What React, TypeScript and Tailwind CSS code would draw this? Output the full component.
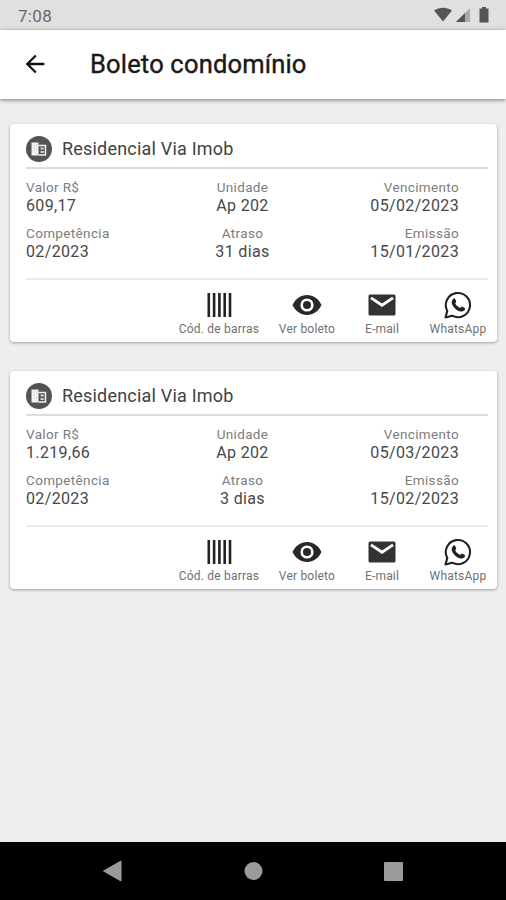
import React from 'react';
import { MdArrowBack } from 'react-icons/md';

interface Boleto {
  residencial: string;
  valor: string;
  unidade: string;
  vencimento: string;
  competencia: string;
  atraso: string;
  emissao: string;
}

const boletos: Boleto[] = [
  {
    residencial: 'Residencial Via Imob',
    valor: '609,17',
    unidade: 'Ap 202',
    vencimento: '05/02/2023',
    competencia: '02/2023',
    atraso: '31 dias',
    emissao: '15/01/2023',
  },
  {
    residencial: 'Residencial Via Imob',
    valor: '1.219,66',
    unidade: 'Ap 202',
    vencimento: '05/03/2023',
    competencia: '02/2023',
    atraso: '3 dias',
    emissao: '15/02/2023',
  },
];

const BuildingIcon = () => (
  <svg width="16" height="14" viewBox="0 0 16 14" fill="none">
    <path d="M0.500 0.500H7.500V13.500H0.500Z" fill="#f3f3f3" />
    <path d="M7.500 3.500H14.500V13H7.500" stroke="#f3f3f3" strokeWidth="1.500" />
    <path d="M9.500 5.500h3.300v2H9.500ZM9.500 9h3.300v2H9.500Z" fill="#cfcfcf" />
    <path d="M2.500 3.200h1.300M2.500 6h1.300M2.500 8.800h1.300M5 3.200h1M5 6h1M5 8.800h1" stroke="#ccc" />
  </svg>
);

const BarcodeIcon = () => (
  <svg width="25" height="24" viewBox="0 0 25 24" fill="#222">
    <path d="M0.500 0h2.600v24H0.500ZM5.800 0h2.600v24H5.800ZM11.100 0h2.600v24H11.100ZM16.400 0h2.600v24H16.400ZM21.700 0h2.600v24H21.700Z" />
  </svg>
);

const EyeIcon = () => (
  <svg width="30" height="22" viewBox="0 0 30 22">
    <path d="M0.500 11C3.500 4.700 8.800 1 15 1S26.500 4.700 29.500 11C26.500 17.300 21.200 21 15 21S3.500 17.300 0.500 11Z" fill="#282828" />
    <circle cx="15" cy="11" r="5.300" fill="#282828" stroke="white" strokeWidth="2.600" />
  </svg>
);

const MailIcon = () => (
  <svg width="28" height="22" viewBox="0 0 28 22" fill="none">
    <rect x="0.500" y="0.500" width="27" height="21" rx="1.500" fill="#333" />
    <path d="M3 3.800L14 11.200L25 3.800" stroke="white" strokeWidth="2.800" />
  </svg>
);

const WhatsAppIcon = () => (
  <svg width="28" height="28" viewBox="0 0 28 28" fill="none">
    <path
      d="M1.500 26.500L3.300 19.900A12.100 12.100 0 1 1 8.100 24.700Z"
      stroke="#222"
      strokeWidth="2.100"
      strokeLinejoin="round"
    />
    <path
      d="M9.300 7.700C10 7 10.900 7.100 11.200 7.900L12.200 10.300C12.500 11.100 11.200 12 11.300 12.600C12.300 14.600 13.900 16 16 16.900C16.700 17 17.300 15.500 18.100 15.600L20.700 16.900C21.400 17.300 21 18.800 20.200 19.600C18.800 20.900 16.800 20.900 14.600 19.900C11.500 18.500 9.200 16 8 13C7.300 11 7.700 9.100 9.300 7.700Z"
      fill="#222"
    />
  </svg>
);

const StatusBar = () => (
  <div className="flex h-[30px] shrink-0 items-center justify-between bg-[#e0e0e0] pl-[18px] pr-[16px] pt-0.5">
    <span className="text-[17px] leading-none tracking-[0.3px] text-[#686868]">7:08</span>
    <svg width="56" height="18" viewBox="0 0 56 18" fill="#555">
      {/* wifi */}
      <path d="M0 3.500C5.500 -0.300 12.500 -0.300 18 3.500L9 14.500Z" />
      {/* signal */}
      <path d="M36 1V15H22Z" fill="#aaa" />
      <path d="M31 6V15H22Z" />
      {/* battery */}
      <path d="M48 0h4v1.500h2.500v14h-9V1.500H48Z" />
    </svg>
  </div>
);

interface FieldProps {
  label: string;
  value: string;
  className?: string;
}

const Field: React.FC<FieldProps> = ({ label, value, className = '' }) => (
  <div className={`flex flex-col ${className}`}>
    <span className="text-[13.5px] leading-[17px] tracking-[0.35px] text-[#7c7c7c]">{label}</span>
    <span className="text-[16px] leading-[19px] tracking-[0.35px] text-[#484848]">{value}</span>
  </div>
);

interface ActionProps {
  label: string;
  className: string;
  children: React.ReactNode;
}

const Action: React.FC<ActionProps> = ({ label, className, children }) => (
  <button className={`flex flex-col items-center ${className}`}>
    <span className="flex h-[30px] items-center justify-center">{children}</span>
    <span className="mt-0.5 whitespace-nowrap text-[12px] leading-[15px] tracking-[0.2px] text-[#707070]">{label}</span>
  </button>
);

const BoletoCard: React.FC<{ boleto: Boleto }> = ({ boleto }) => (
  <div className="h-[218px] rounded-[4px] bg-white shadow-[0_1px_3px_rgba(0,0,0,0.35)]">
    {/* Header */}
    <div className="ml-4 mr-[9px] flex h-[45px] items-center border-b-2 border-[#dcdcdc] pt-[6px]">
      <span className="flex size-[26px] items-center justify-center rounded-full bg-[#535353]">
        <BuildingIcon />
      </span>
      <span className="ml-[10px] text-[18px] leading-6 tracking-[0.2px] text-[#424242]">{boleto.residencial}</span>
    </div>

    {/* Details */}
    <div className="ml-4 mr-[38px] grid h-[109px] grid-cols-3 content-start gap-y-[10px] pt-[10px]">
      <Field label="Valor R$" value={boleto.valor} />
      <Field label="Unidade" value={boleto.unidade} className="items-center" />
      <Field label="Vencimento" value={boleto.vencimento} className="items-end" />
      <Field label="Competência" value={boleto.competencia} />
      <Field label="Atraso" value={boleto.atraso} className="items-center" />
      <Field label="Emissão" value={boleto.emissao} className="items-end" />
    </div>

    {/* Actions */}
    <div className="ml-4 mr-[9px] h-[2px] bg-[#ececec]" />
    <div className="flex justify-end pt-[10px]">
      <Action label="Cód. de barras" className="w-[100px]">
        <BarcodeIcon />
      </Action>
      <Action label="Ver boleto" className="w-[76px]">
        <EyeIcon />
      </Action>
      <Action label="E-mail" className="w-[74px]">
        <MailIcon />
      </Action>
      <Action label="WhatsApp" className="w-[78px]">
        <WhatsAppIcon />
      </Action>
    </div>
  </div>
);

const NavBar = () => (
  <div className="h-[58px] shrink-0 bg-black">
    <svg width="506" height="58" viewBox="0 0 506 58" fill="#9b9b9b">
      <path d="M103.500 29L121 19V39Z" stroke="#9b9b9b" strokeLinejoin="round" />
      <circle cx="253.500" cy="29" r="9" />
      <rect x="384" y="20" width="19" height="19" rx="1" />
    </svg>
  </div>
);

const App = () => {
  return (
    <div className="flex h-[900px] w-[506px] flex-col overflow-hidden bg-[#eeeeee] font-['Roboto','Liberation_Sans',sans-serif]">
      <StatusBar />
      <header className="flex h-[69px] shrink-0 items-center bg-white pb-0.5 pl-[21px] shadow-[0_1px_4px_rgba(0,0,0,0.5)]">
        <MdArrowBack className="size-[28px] text-[#111]" />
        <h1 className="ml-[41px] text-[25.5px] font-normal leading-8 tracking-[0.18px] text-[#1a1a1a] [-webkit-text-stroke:0.4px_#1a1a1a]">
          Boleto condomínio
        </h1>
      </header>

      <main className="flex flex-1 flex-col gap-[29px] pl-[10px] pr-[9px] pt-[25px]">
        {boletos.map((boleto) => (
          <BoletoCard key={boleto.vencimento} boleto={boleto} />
        ))}
      </main>

      <NavBar />
    </div>
  );
};

export default App;
